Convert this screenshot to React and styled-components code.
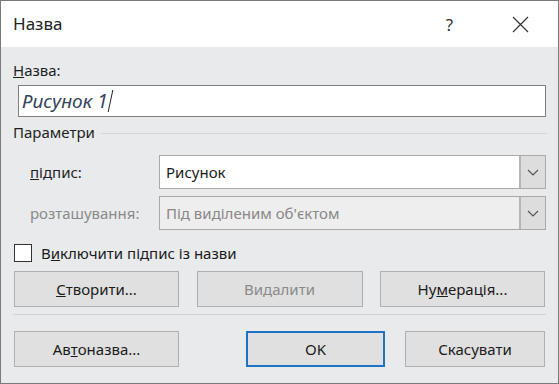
import React from 'react';
import styled, { createGlobalStyle } from 'styled-components';

const Global = createGlobalStyle`
    html, body {
        margin: 0;
        padding: 0;
        background: #e9eaec;
    }
    body {
        font-family: "Noto Sans", "Open Sans", sans-serif;
    }
`;

const Dialog = styled.div`
    width: 559px;
    height: 384px;
    box-sizing: border-box;
    border: 1px solid #7a7a7a;
    background: #e9eaec;
    display: flex;
    flex-direction: column;
    color: #1b1b1b;
`;

const TitleBar = styled.div`
    height: 46px;
    background: #ffffff;
    display: flex;
    align-items: center;
    padding: 0 2px 0 12px;
`;

const Title = styled.div`
    flex: 1;
    font-size: 17px;
    color: #222;
    padding-bottom: 2px;
`;

const TitleButton = styled.div`
    width: 71px;
    height: 46px;
    display: flex;
    align-items: center;
    justify-content: center;
    font-size: 17px;
    color: #333;
`;

const Body = styled.div`
    flex: 1;
    padding: 13px 12px 0 12px;
    display: flex;
    flex-direction: column;
    font-size: 15px;
`;

const Label = styled.div`
    height: 20px;
    line-height: 20px;
    color: ${p => (p.$disabled ? '#8a8a8a' : '#1f1f1f')};
`;

const TextInput = styled.div`
    margin: 5px 0 0 5px;
    width: 528px;
    height: 32px;
    box-sizing: border-box;
    border: 1px solid #7f7f7f;
    background: #fff;
    display: flex;
    align-items: center;
    padding-left: 3px;
    font-size: 19px;
    font-style: italic;
    color: #33435a;
`;

const Caret = styled.span`
    display: inline-block;
    width: 1px;
    height: 22px;
    background: #222;
    margin-left: 2px;
    transform: skewX(-12deg);
`;

const GroupHead = styled.div`
    display: flex;
    align-items: center;
    gap: 6px;
    margin-top: 4px;
    height: 22px;
    color: #1f1f1f;

    &::after {
        content: '';
        flex: 1;
        height: 1px;
        background: #d4d5d8;
        margin-right: -1px;
        margin-top: 2px;
    }
`;

const FieldGrid = styled.div`
    display: grid;
    grid-template-columns: 129px 387px;
    row-gap: 7px;
    margin: 12px 0 0 17px;
    align-items: center;
`;

const Select = styled.div`
    height: 34px;
    box-sizing: border-box;
    border: 1px solid #a9a9a9;
    background: ${p => (p.$disabled ? '#eeeeef' : '#ffffff')};
    display: flex;
    align-items: center;
    color: ${p => (p.$disabled ? '#888' : '#1b1b1b')};
`;

const SelectText = styled.div`
    flex: 1;
    padding-left: 6px;
    padding-bottom: 1px;
`;

const DropButton = styled.div`
    width: 26px;
    height: 100%;
    box-sizing: border-box;
    border-left: 2px solid #b5b5b5;
    background: #dddddd;
    display: flex;
    align-items: center;
    justify-content: center;
`;

const CheckRow = styled.label`
    display: flex;
    align-items: center;
    gap: 9px;
    margin-top: 13px;
    height: 20px;
`;

const Box = styled.span`
    width: 18px;
    height: 18px;
    box-sizing: border-box;
    border: 1px solid #333;
    background: #fff;
    margin-left: 1px;
`;

const ButtonRow = styled.div`
    display: flex;
    justify-content: space-between;
    width: 531px;
    margin-top: ${p => p.$top}px;
    padding-left: 1px;
`;

const Button = styled.div`
    width: ${p => p.$w}px;
    height: 36px;
    box-sizing: border-box;
    border: ${p => (p.$primary ? '2px solid #1f73c4' : '1px solid #b0b0b0')};
    background: #e0e0e0;
    display: flex;
    align-items: center;
    justify-content: center;
    color: ${p => (p.$disabled ? '#8a8a8a' : '#1b1b1b')};
    padding-bottom: 1px;
`;

const RightGroup = styled.div`
    display: flex;
    gap: 20px;
`;

const Separator = styled.div`
    height: 1px;
    background: #d2d3d6;
    width: 533px;
    margin-top: 7px;
`;

const Chevron = () => (
    <svg width="12" height="7" viewBox="0 0 12 7">
        <path d="M1 1l5 5 5-5" fill="none" stroke="#555" strokeWidth="1.2" />
    </svg>
);

const Close = () => (
    <svg width="17" height="17" viewBox="0 0 17 17">
        <path d="M1 1l15 15M16 1L1 16" stroke="#333" strokeWidth="1.2" />
    </svg>
);

const App = () => (
    <>
        <Global />
        <Dialog>
            <TitleBar>
                <Title>Назва</Title>
                <TitleButton>?</TitleButton>
                <TitleButton><Close /></TitleButton>
            </TitleBar>
            <Body>
                <Label><u>Н</u>азва:</Label>
                <TextInput>Рисунок 1<Caret /></TextInput>
                <GroupHead>Параметри</GroupHead>
                <FieldGrid>
                    <Label><u>п</u>ідпис:</Label>
                    <Select>
                        <SelectText>Рисунок</SelectText>
                        <DropButton><Chevron /></DropButton>
                    </Select>
                    <Label $disabled>розташування:</Label>
                    <Select $disabled>
                        <SelectText>Під виділеним об'єктом</SelectText>
                        <DropButton><Chevron /></DropButton>
                    </Select>
                </FieldGrid>
                <CheckRow>
                    <Box />
                    <span>В<u>и</u>ключити підпис із назви</span>
                </CheckRow>
                <ButtonRow $top={8}>
                    <Button $w={165}><u>С</u>творити...</Button>
                    <Button $w={166} $disabled>Видалити</Button>
                    <Button $w={165}>Ну<u>м</u>ерація...</Button>
                </ButtonRow>
                <Separator />
                <ButtonRow $top={16}>
                    <Button $w={165}>Ав<u>т</u>оназва...</Button>
                    <RightGroup>
                        <Button $w={139} $primary>OK</Button>
                        <Button $w={140}>Скасувати</Button>
                    </RightGroup>
                </ButtonRow>
            </Body>
        </Dialog>
    </>
);

export default App;
